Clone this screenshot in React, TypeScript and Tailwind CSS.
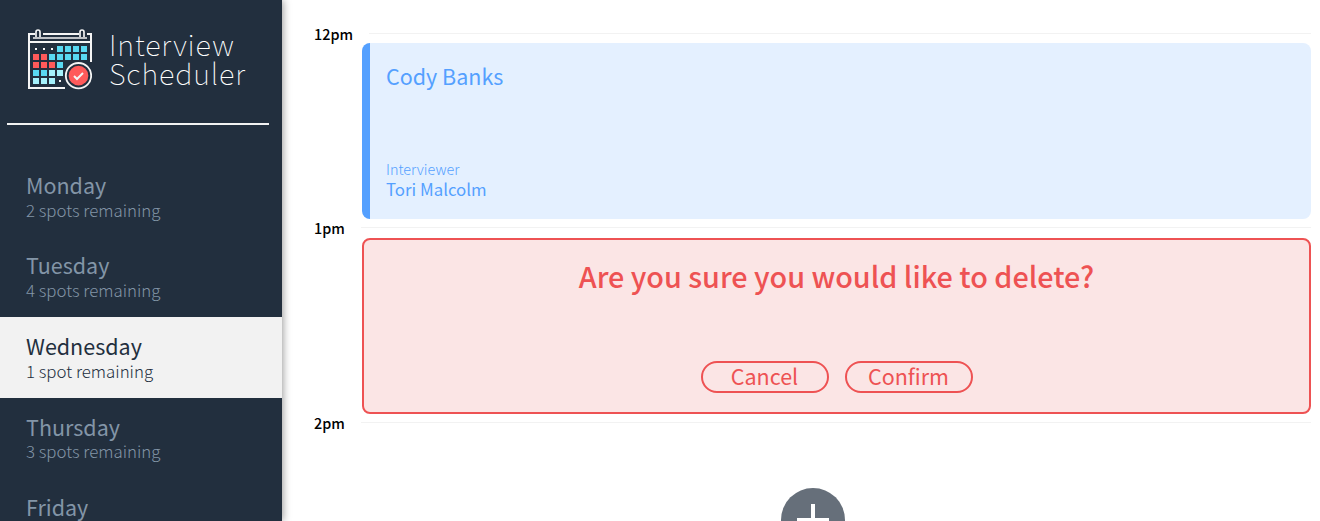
const CYAN = "#59d9f2";
const PALE = "#a5f1fb";
const RED = "#ff5a5a";

const cells: [number, number, string][] = [
  [3, 0, CYAN], [4, 0, CYAN], [5, 0, CYAN], [6, 0, CYAN],
  [0, 1, RED], [1, 1, RED], [2, 1, CYAN], [3, 1, CYAN], [4, 1, CYAN], [5, 1, CYAN], [6, 1, CYAN],
  [0, 2, RED], [1, 2, RED], [2, 2, RED], [3, 2, CYAN],
  [0, 3, CYAN], [1, 3, CYAN], [2, 3, PALE], [3, 3, PALE],
  [0, 4, PALE], [1, 4, PALE], [2, 4, PALE],
];

function CalendarLogo() {
  return (
    <svg width="64" height="62" viewBox="84 84 192 186" className="shrink-0">
      <g fill="none" stroke="#f5f5f5" strokeWidth="6">
        <path d="M105 102H87V264H195M129 102H237M261 102H273V186M87 126H273" />
        <path d="M99 114H261" strokeWidth="5" />
        <path d="M108 111V96Q108 90 114 90T120 96V111M240 111V96Q240 90 246 90T252 96V111" strokeWidth="5" />
      </g>
      {cells.map(([c, r, fill]) => (
        <rect key={`${c}-${r}`} x={99 + c * 24} y={138 + r * 24} width="18" height="18" fill={fill} />
      ))}
      <path d="M105 144h6v6h-6zM129 144h6v6h-6zM153 144h6v6h-6zM177 240h6v6h-6z" fill="#f5f5f5" />
      <circle cx="235.5" cy="227" r="38" fill="#222f3e" stroke="#f5f5f5" strokeWidth="5.5" />
      <circle cx="235.5" cy="227" r="29.5" fill={RED} />
      <path d="M222 228L231 237L249 219" fill="none" stroke="#f5f5f5" strokeWidth="6" />
    </svg>
  );
}

const days = [
  { name: "Monday", spots: "2 spots remaining" },
  { name: "Tuesday", spots: "4 spots remaining" },
  { name: "Wednesday", spots: "1 spot remaining", selected: true },
  { name: "Thursday", spots: "3 spots remaining" },
  { name: "Friday", spots: "" },
];

function Sidebar() {
  return (
    <aside className="z-10 flex w-[282px] shrink-0 flex-col overflow-hidden bg-[#222f3e] shadow-[1px_0_8px_rgba(0,0,0,0.4)]">
      <div className="flex h-[123px] shrink-0 pt-[28px] pl-[28px]">
        <CalendarLogo />
        <div className="pt-px pl-[17px] text-[29px] leading-[29px] font-thin tracking-[0.85px] text-white">
          <div>Interview</div>
          <div>Scheduler</div>
        </div>
      </div>
      <hr className="mr-[13px] ml-[7px] h-[2px] shrink-0 border-0 bg-[#f2f2f2]" />
      <ul className="mt-[30.8px]">
        {days.map((d) => (
          <li
            key={d.name}
            className={
              d.selected
                ? "h-[80.6px] bg-[#f2f2f2] pt-[17px] pl-[26px] text-[#222f3e]"
                : "h-[80.6px] pt-[17px] pl-[26px] text-[#8395a7]"
            }
          >
            <h2 className="text-[21.5px] leading-[24px] font-normal">{d.name}</h2>
            <h3 className="mt-[1.75px] text-[16.85px] leading-[22px] font-light">{d.spots}</h3>
          </li>
        ))}
      </ul>
    </aside>
  );
}

function Hour({ time, inset }: { time: string; inset?: boolean }) {
  return (
    <header className="flex h-[20px] items-center">
      <h4 className="w-[47px] pt-[1px] text-[14.4px] leading-[20px] font-medium text-black">{time}</h4>
      <hr className={inset ? "ml-[8px] h-px grow border-0 bg-[#f2f2f2]" : "h-px grow border-0 bg-[#f2f2f2]"} />
    </header>
  );
}

export default function App() {
  return (
    <div className="flex h-[521px] w-[1320px] overflow-hidden bg-white font-['Noto_Sans_CJK_JP',sans-serif]">
      <Sidebar />
      <main className="flex min-w-0 grow flex-col pt-[23px] pr-[9px] pl-[32px]">
        <article className="h-[194.5px] shrink-0">
          <Hour time="12pm" inset />
          <section className="ml-[48px] flex h-[176px] flex-col rounded-[8px] border-l-8 border-[#54a0ff] bg-[#e4f0ff] pt-[21px] pl-[16px] text-[#54a0ff]">
            <h2 className="text-[21.5px] leading-[24px] font-normal">Cody Banks</h2>
            <h4 className="mt-[71px] text-[14.4px] leading-[20px] font-light">Interviewer</h4>
            <h3 className="text-[16.85px] leading-[20px] font-normal">Tori Malcolm</h3>
          </section>
        </article>
        <article className="h-[194.5px] shrink-0">
          <Hour time="1pm" />
          <section className="ml-[48px] flex h-[176px] flex-col items-center rounded-[8px] border-2 border-[#ee5253] bg-[#fbe5e5] pt-[19px] text-[#ee5253]">
            <h1 className="text-[28.75px] leading-[34px] font-medium">Are you sure you would like to delete?</h1>
            <div className="mt-[68px] flex gap-[16px]">
              <button className="h-[32px] w-[128px] rounded-full border-2 border-[#ee5253] pb-[2px] text-[21.5px] leading-[26px]">Cancel</button>
              <button className="h-[32px] w-[128px] rounded-full border-2 border-[#ee5253] pb-[2px] text-[21.5px] leading-[26px]">Confirm</button>
            </div>
          </section>
        </article>
        <article className="shrink-0">
          <Hour time="2pm" />
          <div className="mt-[56px] flex justify-center">
            <svg width="64" height="64" viewBox="0 0 64 64">
              <circle cx="32" cy="32" r="32" fill="#666f7a" />
              <path d="M30 16h4v14h14v4H34v14h-4V34H16v-4h14z" fill="#fff" />
            </svg>
          </div>
        </article>
      </main>
    </div>
  );
}
